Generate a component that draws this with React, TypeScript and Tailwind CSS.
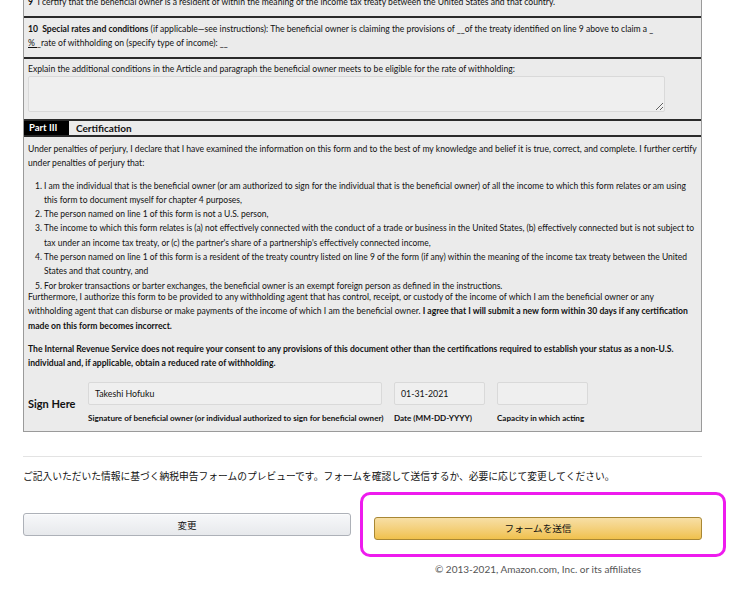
import React from "react";

const F = { fontFamily: "Lato, 'Open Sans', sans-serif" } as const;

export default function App() {
  return (
    <div className="relative w-[752px] h-[591px] overflow-hidden bg-white text-[#111]" style={F}>
      <div className="ml-[23px] w-[679px]">
        {/* Form */}
        <div className="mt-[-12px] border-x border-b border-[#9a9a9a] bg-[#ebebeb] text-[8.6px] leading-[14px]">
          <div className="px-[4px] pt-[7px] pb-[7px] border-b-2 border-[#2a2a2a]">
            <span className="font-bold">9</span>&nbsp;&nbsp;I certify that the beneficial owner is a resident of within the meaning of the income tax treaty between the United States and that country.
          </div>
          <div className="px-[4px] pt-[4px] pb-[7px] border-b-2 border-[#2a2a2a]">
            <span className="font-bold">10&nbsp;&nbsp;Special rates and conditions</span> (if applicable—see instructions): The beneficial owner is claiming the provisions of __of the treaty identified on line 9 above to claim a _
            <br />
            <span className="underline">%&nbsp;</span>_rate of withholding on (specify type of income): __
          </div>
          <div className="px-[4px] pt-[3px] pb-[7px] border-b-2 border-[#2a2a2a]">
            <div>Explain the additional conditions in the Article and paragraph the beneficial owner meets to be eligible for the rate of withholding:</div>
            <textarea
              readOnly
              className="block w-[637px] h-[36px] mt-[0px] bg-[#efefef] border border-[#d9d9d9] rounded-[2px]"
            />
          </div>
          <div className="flex items-center h-[16px] border-b-2 border-[#2a2a2a]">
            <div className="bg-black text-white font-bold text-[9.5px] h-full flex items-center px-[5px] w-[45px]">Part III</div>
            <div className="font-bold text-[10px] pl-[7px]">Certification</div>
          </div>
          <div className="pl-[4px] pr-[1px] pt-[5px] pb-[6px] leading-[14.3px]">
            <p>
              Under penalties of perjury, I declare that I have examined the information on this form and to the best of my knowledge and belief it is true, correct, and complete. I further certify under penalties of perjury that:
            </p>
            <ol className="mt-[8px] text-[8.5px]">
              {[
                "I am the individual that is the beneficial owner (or am authorized to sign for the individual that is the beneficial owner) of all the income to which this form relates or am using this form to document myself for chapter 4 purposes,",
                "The person named on line 1 of this form is not a U.S. person,",
                "The income to which this form relates is (a) not effectively connected with the conduct of a trade or business in the United States, (b) effectively connected but is not subject to tax under an income tax treaty, or (c) the partner's share of a partnership's effectively connected income,",
                "The person named on line 1 of this form is a resident of the treaty country listed on line 9 of the form (if any) within the meaning of the income tax treaty between the United States and that country, and",
                "For broker transactions or barter exchanges, the beneficial owner is an exempt foreign person as defined in the instructions.",
              ].map((t, i) => (
                <li key={i} className="flex pl-[7px]">
                  <span className="w-[9px] shrink-0">{i + 1}.</span>
                  <span>{t}</span>
                </li>
              ))}
            </ol>
            <p className="mt-[-3px] pr-[3px]">
              Furthermore, I authorize this form to be provided to any withholding agent that has control, receipt, or custody of the income of which I am the beneficial owner or any withholding agent that can disburse or make payments of the income of which I am the beneficial owner.{" "}
              <span className="font-bold">I agree that I will submit a new form within 30 days if any certification made on this form becomes incorrect.</span>
            </p>
            <p className="mt-[9px] pr-[3px] font-bold">
              The Internal Revenue Service does not require your consent to any provisions of this document other than the certifications required to establish your status as a non-U.S. individual and, if applicable, obtain a reduced rate of withholding.
            </p>
            <div className="flex mt-[12px]">
              <div className="w-[60px] flex items-end">
                <span className="font-bold text-[11px] leading-[14px] mb-[14px]">Sign Here</span>
              </div>
              <div className="w-[294px]">
                <div className="h-[23px] bg-[#efefef] border border-[#d9d9d9] rounded-[2px] flex items-center px-[6px] text-[8.8px]">Takeshi Hofuku</div>
                <div className="font-bold text-[8.1px] leading-[14px] mt-[6px] whitespace-nowrap">Signature of beneficial owner (or individual authorized to sign for beneficial owner)</div>
              </div>
              <div className="w-[91px] ml-[12px]">
                <div className="h-[23px] bg-[#efefef] border border-[#d9d9d9] rounded-[2px] flex items-center px-[6px] text-[8.8px]">01-31-2021</div>
                <div className="font-bold text-[8.1px] leading-[14px] mt-[6px] whitespace-nowrap">Date (MM-DD-YYYY)</div>
              </div>
              <div className="w-[91px] ml-[12px]">
                <div className="h-[23px] bg-[#efefef] border border-[#d9d9d9] rounded-[2px]"></div>
                <div className="font-bold text-[8.1px] leading-[14px] mt-[6px] whitespace-nowrap">Capacity in which acting</div>
              </div>
            </div>
          </div>
        </div>

        <div className="mt-[24px] border-t border-[#e3e3e3]"></div>
        <p
          className="mt-[12px] text-[9.75px] leading-[14px] text-[#111]"
          style={{ fontFamily: "'Noto Sans CJK JP', sans-serif" }}
        >
          ご記入いただいた情報に基づく納税申告フォームのプレビューです。フォームを確認して送信するか、必要に応じて変更してください。
        </p>
        <div className="grid grid-cols-2 gap-[23px] mt-[30px]" style={{ fontFamily: "'Noto Sans CJK JP', sans-serif" }}>
          <button className="h-[23px] rounded-[3px] border border-[#adb1b8] bg-gradient-to-b from-[#f7f8fa] to-[#e7e9ec] text-[9.5px] text-[#111] shadow-[inset_0_1px_0_rgba(255,255,255,0.6)]">
            変更
          </button>
          <div className="relative h-[23px]">
            <button className="w-full h-[23px] rounded-[3px] border border-[#a88734] bg-gradient-to-b from-[#f7dfa5] to-[#f0c14b] text-[9.6px] text-[#111]">
              フォームを送信
            </button>
            <div className="absolute left-[-14px] top-[-21px] w-[366px] h-[65px] border-[3px] border-[#ee1bee] rounded-[10px]"></div>
          </div>
        </div>
        <div className="grid grid-cols-2 gap-[23px] mt-[26px]">
          <div></div>
          <div className="text-center text-[10px] leading-[14px] text-[#555]">
            © 2013-2021, Amazon.com, Inc. or its affiliates
          </div>
        </div>
      </div>
    </div>
  );
}
